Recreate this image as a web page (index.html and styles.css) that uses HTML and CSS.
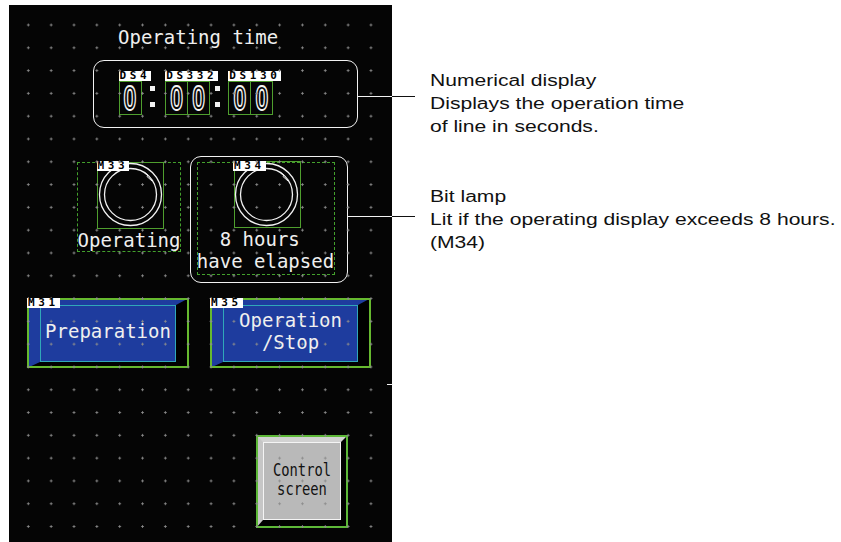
FILE: index.html
```html
<!DOCTYPE html>
<html lang="en">
  <head>
    <meta charset="UTF-8" />
    <meta name="viewport" content="width=device-width, initial-scale=1.0" />
    <title>Operating time screen</title>
    <link rel="stylesheet" href="styles.css">
  </head>
  <body>
    <!-- GOT screen canvas -->
    <div class="screen">
      <!-- Screen title -->
      <p class="title">Operating time</p>

      <!-- Numerical display DS4:DS332:DS130 -->
      <div class="numbox">
        <div class="group">
          <span class="tag">DS4</span>
          <div class="cells"><span class="cell"><b>0</b></span></div>
        </div>
        <div class="colon colon-1"><i></i><i></i></div>
        <div class="group group-2">
          <span class="tag">DS332</span>
          <div class="cells"><span class="cell"><b>0</b></span><span class="cell"><b>0</b></span></div>
        </div>
        <div class="colon colon-2"><i></i><i></i></div>
        <div class="group group-3">
          <span class="tag">DS130</span>
          <div class="cells"><span class="cell"><b>0</b></span><span class="cell"><b>0</b></span></div>
        </div>
      </div>

      <!-- Bit lamp M33 -->
      <div class="lamp lamp-run">
        <div class="bulb">
          <span class="tag">M33</span>
          <svg viewBox="0 0 67 67" width="67" height="67">
            <circle cx="33.5" cy="33.5" r="31" fill="none" stroke="#f2f2f2" stroke-width="1.3" />
            <circle cx="33.5" cy="33.5" r="26" fill="none" stroke="#f2f2f2" stroke-width="1.3" />
            <path d="M47 11 L51 14 L50 15.5 L55 20" fill="none" stroke="#f2f2f2" stroke-width="1" />
          </svg>
        </div>
        <span class="lamp-text">Operating</span>
      </div>

      <!-- Bit lamp M34 -->
      <div class="lamp-frame">
        <div class="lamp lamp-hours">
          <div class="bulb">
            <span class="tag">M34</span>
            <svg viewBox="0 0 67 67" width="67" height="67">
              <circle cx="33.5" cy="33.5" r="31" fill="none" stroke="#f2f2f2" stroke-width="1.3" />
              <circle cx="33.5" cy="33.5" r="26" fill="none" stroke="#f2f2f2" stroke-width="1.3" />
              <path d="M47 11 L51 14 L50 15.5 L55 20" fill="none" stroke="#f2f2f2" stroke-width="1" />
            </svg>
          </div>
          <span class="lamp-text pre">8 hours </span>
          <span class="lamp-text">have elapsed</span>
        </div>
      </div>

      <!-- Touch switches -->
      <div class="btn btn-prep">
        <span class="tag">M31</span>
        <div class="face"><span>Preparation</span></div>
      </div>
      <div class="btn btn-stop">
        <span class="tag">M35</span>
        <div class="face"><span>Operation</span><span>/Stop</span></div>
      </div>
      <div class="btn btn-grey">
        <div class="face"><span>Control</span><span>screen</span></div>
      </div>

      <!-- Edge marker -->
      <span class="marker"></span>
    </div>

    <!-- Explanations -->
    <div class="notes">
      <div class="note note-time">
        <span class="wire"></span>
        <p>Numerical display<br>Displays the operation time<br>of line in seconds.</p>
      </div>
      <div class="note note-lamp">
        <span class="wire"></span>
        <p>Bit lamp<br>Lit if the operating display exceeds 8 hours.<br>(M34)</p>
      </div>
    </div>
  </body>
</html>
```

FILE: styles.css
```css
/* Full page */
body {
  margin: 0;
  background-color: #fff;
  display: flex;
  align-items: flex-start;
  font-family: "DejaVu Sans Mono", monospace;
}

/* Black screen with editor grid */
.screen {
  position: relative;
  flex-shrink: 0;
  width: 383px;
  height: 537px;
  margin: 5px 0 0 9px;
  background-color: #050505;
  color: #efefef;
  font-size: 19px;
  line-height: 22px;
}
.screen::after {
  content: "";
  position: absolute;
  inset: 0;
  background-image: radial-gradient(circle, #8c8c8c 0.9px, transparent 1.4px);
  background-size: 22.85px 22.8px;
  background-position: 7.9px 8.6px;
  pointer-events: none;
}

/* Device tags */
.tag {
  display: inline-block;
  height: 10px;
  padding: 0 1px;
  background-color: #fff;
  color: #000;
  font-size: 11px;
  font-weight: bold;
  line-height: 10px;
  letter-spacing: 3.6px;
  white-space: nowrap;
}

/* Title */
.title {
  position: absolute;
  left: 109px;
  top: 21px;
  margin: 0;
}

/* Numerical display */
.numbox {
  position: absolute;
  left: 84px;
  top: 55px;
  width: 265px;
  height: 68px;
  box-sizing: border-box;
  border: 1.5px solid #f2f2f2;
  border-radius: 11px;
  display: flex;
  align-items: flex-start;
  padding: 9.5px 0 0 24.5px;
}
.group {
  display: flex;
  flex-direction: column;
  align-items: flex-start;
}
.cells {
  display: flex;
}
.cell {
  width: 23px;
  height: 34px;
  box-sizing: border-box;
  border: 1px solid #4f9f2e;
  display: flex;
  align-items: center;
  justify-content: center;
}
.cell + .cell {
  margin-left: -1px;
}
.cell b {
  display: block;
  color: transparent;
  -webkit-text-stroke: 1.2px #f2f2f2;
  font-family: "Liberation Sans", Arial, sans-serif;
  font-weight: bold;
  font-size: 23px;
  line-height: 20px;
  transform: scaleY(1.55);
}
.colon {
  display: flex;
  flex-direction: column;
  gap: 11px;
}
.colon i {
  width: 5px;
  height: 5px;
  background-color: #f2f2f2;
}
.colon-1 {
  margin: 15px 10px 0 -1px;
}
.colon-2 {
  margin: 15px 8px 0 -3px;
}

/* Bit lamps */
.lamp {
  position: absolute;
  left: 68px;
  top: 157px;
  width: 104px;
  height: 90px;
  box-sizing: border-box;
  border: 1.5px dashed #43a12c;
  display: flex;
  flex-direction: column;
  align-items: center;
}
.bulb {
  position: relative;
  width: 67px;
  height: 67px;
  box-sizing: border-box;
  margin-top: -1.5px;
  margin-left: 3px;
  border: 1.5px solid #4f9f2e;
}
.bulb svg {
  display: block;
  margin: -1.5px;
}
.bulb .tag {
  position: absolute;
  left: -1.5px;
  top: -1.5px;
}
.lamp-text {
  white-space: nowrap;
}
.pre {
  white-space: pre;
}
.lamp-frame {
  position: absolute;
  left: 181px;
  top: 151px;
  width: 158px;
  height: 127px;
  box-sizing: border-box;
  border: 1.5px solid #f2f2f2;
  border-radius: 11px;
  padding: 4.5px 0 0 5.5px;
}
.lamp-frame .lamp {
  position: static;
  width: 138px;
  height: 113px;
}

/* Touch switches */
.btn {
  position: absolute;
  top: 293px;
  height: 70px;
  box-sizing: border-box;
  display: flex;
  border-style: solid;
  border-width: 7px 13px 6px 13px;
  border-color: #1e3c9e #000 #000 #1e3c9e;
  outline: 2px solid #66b92f;
  outline-offset: -2px;
}
.btn-prep {
  left: 18px;
  width: 162px;
}
.btn-stop {
  left: 201px;
  width: 161px;
}
.btn .tag {
  position: absolute;
  left: -13px;
  top: -7px;
  z-index: 1;
}
.face {
  flex: 1;
  box-sizing: border-box;
  border: 1px solid #30a8b8;
  background-color: #1e3c9e;
  display: flex;
  flex-direction: column;
  align-items: center;
  justify-content: center;
  padding-bottom: 6px;
  white-space: nowrap;
}
.btn-grey {
  left: 247px;
  top: 430px;
  width: 92px;
  height: 93px;
  border-width: 7px 7px 8px 7px;
  border-color: #d2d2d2 #000 #000 #c6c6c6;
  outline-color: #5db838;
}
.btn-grey .face {
  background-color: #b9b9b9;
  border: 1.5px solid #f4f4f4;
  color: #111;
  font-size: 13.8px;
  line-height: 13.3px;
  padding-bottom: 2px;
}
.btn-grey .face span {
  transform: scaleY(1.28);
}
.btn-grey .face span + span {
  margin-top: 5.5px;
}

/* Small marker at the screen edge */
.marker {
  position: absolute;
  left: 378px;
  top: 379px;
  width: 6px;
  height: 1px;
  background-color: #f2f2f2;
}

/* Explanations */
.notes {
  padding-top: 68.5px;
  font-family: "Liberation Sans", Arial, sans-serif;
  font-size: 17.3px;
  line-height: 23px;
  color: #111;
}
.note {
  position: relative;
  display: flex;
  align-items: flex-start;
}
.note p {
  margin: 0;
  white-space: nowrap;
  transform: scaleX(1.22);
  transform-origin: left;
}
.wire {
  flex-shrink: 0;
  height: 1px;
}
.note-time .wire {
  width: 57px;
  margin: 27.5px 15px 0 -34px;
  background: linear-gradient(to right, #f2f2f2 34px, #111 34px);
}
.note-lamp {
  margin-top: 47px;
}
.note-lamp .wire {
  width: 67px;
  margin: 31.5px 15px 0 -44px;
  background: linear-gradient(to right, #f2f2f2 44px, #111 44px);
}
```
